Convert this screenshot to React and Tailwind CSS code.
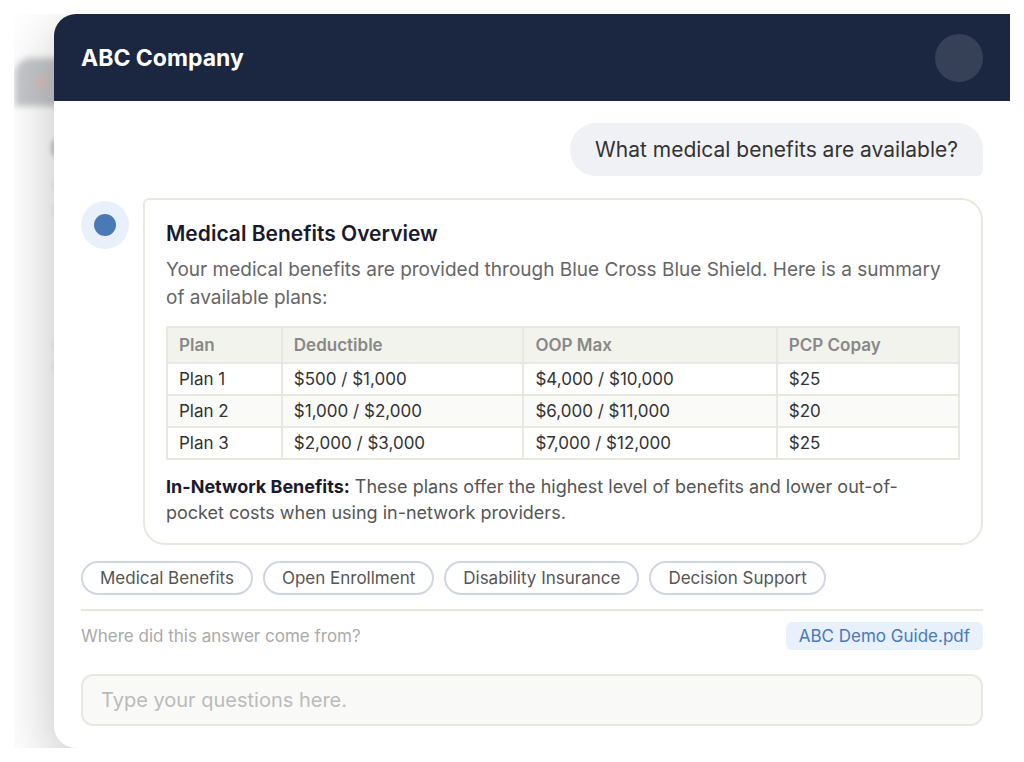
import React from "react";

const plans = [
  ["Plan 1", "$500 / $1,000", "$4,000 / $10,000", "$25"],
  ["Plan 2", "$1,000 / $2,000", "$6,000 / $11,000", "$20"],
  ["Plan 3", "$2,000 / $3,000", "$7,000 / $12,000", "$25"],
];

const columns = [
  { title: "Plan", width: "w-[14.5%]" },
  { title: "Deductible", width: "w-[30.5%]" },
  { title: "OOP Max", width: "w-[32%]" },
  { title: "PCP Copay", width: "w-[23%]" },
];

const topics = ["Medical Benefits", "Open Enrollment", "Disability Insurance", "Decision Support"];

// Out-of-focus window that sits behind the chat panel.
function Backdrop() {
  return (
    <div aria-hidden="true" className="absolute inset-y-0 left-0 w-24">
      <div className="absolute top-11 left-px h-[360px] w-24 rounded-tl-2xl bg-white/60 blur-[3px]">
        <div className="h-12 rounded-tl-2xl bg-[#1b2030]/25" />
      </div>
      <div className="absolute top-[63px] left-[22px] size-2.5 rounded-full bg-[#f5b8a8]/60 blur-[3px]" />
      <div className="absolute top-[126px] left-[37px] h-4 w-8 rounded bg-black/20 blur-[2px]" />
      <div className="absolute top-[165px] left-[38px] h-3 w-8 bg-black/5 blur-[2px]" />
      <div className="absolute top-[190px] left-[38px] h-3 w-8 bg-black/5 blur-[2px]" />
      <div className="absolute top-[325px] left-[38px] h-3 w-8 bg-black/5 blur-[2px]" />
      <div className="absolute top-[347px] left-[38px] h-3 w-8 bg-black/5 blur-[2px]" />
    </div>
  );
}

function PlanTable() {
  return (
    <table className="mt-3.5 w-full table-fixed border-collapse text-left text-[17px] leading-6 text-[#333]">
      <thead>
        <tr className="bg-[#f2f3ed] text-[#888]">
          {columns.map((c) => (
            <th key={c.title} className={`${c.width} border-2 border-[#e8e8e0] px-[11px] py-[5px] font-semibold`}>
              {c.title}
            </th>
          ))}
        </tr>
      </thead>
      <tbody>
        {plans.map((row) => (
          <tr key={row[0]} className="even:bg-[#fafaf8]">
            {row.map((cell, i) => (
              <td key={i} className="border-2 border-[#e8e8e0] px-[11px] py-[3px]">
                {cell}
              </td>
            ))}
          </tr>
        ))}
      </tbody>
    </table>
  );
}

export default function App() {
  return (
    <div className="min-h-screen bg-white p-3.5 font-['Inter',sans-serif]">
      <div className="relative overflow-hidden pl-10">
        <Backdrop />
        <main className="relative overflow-clip rounded-l-[22px] bg-white shadow-[0_20px_60px_rgba(0,0,0,0.25)]">
          <header className="flex items-center justify-between bg-[#1b2640] px-[27px] pt-5 pb-[19px]">
            <h1 className="text-[23px] leading-8 font-bold text-white">ABC Company</h1>
            <div className="size-12 rounded-full bg-white/12" />
          </header>

          <div className="flex flex-col px-[27px] pt-[22px] pb-[22px]">
            <p className="self-end rounded-[26px] rounded-br-md bg-[#f0f1f5] px-[25px] py-[11px] text-[21px] leading-[31px] text-[#333]">
              What medical benefits are available?
            </p>

            <div className="mt-[22px] flex items-start gap-3.5">
              <div className="mt-[3px] flex size-12 shrink-0 items-center justify-center rounded-full bg-[#e8f0fc]">
                <div className="size-[22px] rounded-full bg-[#4a7ab5]" />
              </div>
              <article className="min-w-0 flex-1 rounded-[22px] rounded-tl-md border-2 border-[#e8e8e0] px-[21px] pt-[18px] pb-[17px]">
                <h2 className="text-[21px] leading-8 font-semibold text-[#1a1a2e]">Medical Benefits Overview</h2>
                <p className="mt-1.5 text-[19px] leading-7 text-[#666]">
                  Your medical benefits are provided through Blue Cross Blue Shield. Here is a summary of available plans:
                </p>
                <PlanTable />
                <p className="mt-3.5 pr-4 text-lg leading-[26px] text-[#555]">
                  <strong className="font-bold text-[#1a1a2e]">In-Network Benefits:</strong> These plans offer the
                  highest level of benefits and lower out-of-pocket costs when using in-network providers.
                </p>
              </article>
            </div>

            <nav className="mt-4 flex flex-wrap gap-2.5">
              {topics.map((t) => (
                <button
                  key={t}
                  type="button"
                  className="rounded-full border-2 border-[#d0d5e0] px-[17px] py-[3px] text-[17px] leading-6 text-[#555]"
                >
                  {t}
                </button>
              ))}
            </nav>

            <div className="mt-3.5 flex items-center justify-between border-t-2 border-[#e8e8e0] pt-[11px] text-[17px] leading-6">
              <span className="text-[#aaa]">Where did this answer come from?</span>
              <a href="#guide" className="rounded-md bg-[#e8f0fc] px-[13px] py-0.5 text-[#4a7ab5]">
                ABC Demo Guide.pdf
              </a>
            </div>

            <input
              type="text"
              aria-label="Your question"
              placeholder="Type your questions here."
              className="mt-6 w-full rounded-xl border-2 border-[#e8e8e0] bg-[#f9f9f7] px-[18px] py-2.5 text-xl leading-7 text-[#333] outline-none placeholder:text-[#bbb]"
            />
          </div>
        </main>
      </div>
    </div>
  );
}
